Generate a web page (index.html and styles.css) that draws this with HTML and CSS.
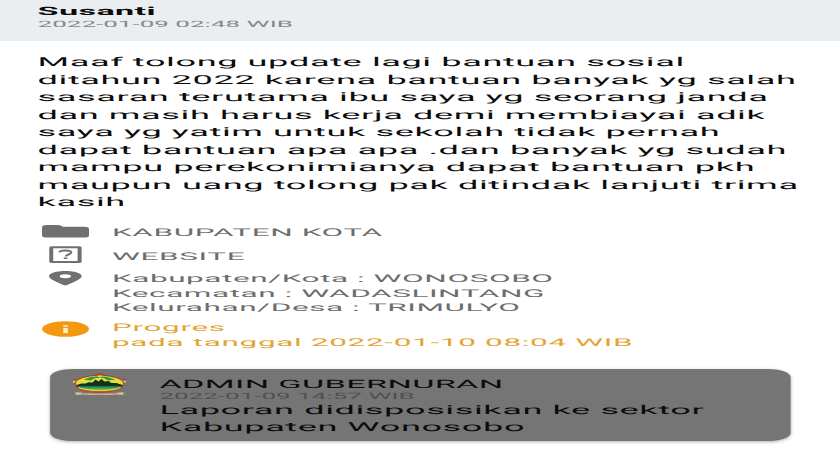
FILE: index.html
```
<!DOCTYPE html>
<html lang="id">
<head>
<meta charset="utf-8">
<title>Laporan</title>
<link rel="stylesheet" href="styles.css">
</head>
<body>
<main class="page">
  <header class="head">
    <div class="name">Susanti</div>
    <div class="date">2022-01-09 02:48 WIB</div>
  </header>
  <p class="message">Maaf tolong update lagi bantuan sosial<br>ditahun 2022 karena bantuan banyak yg salah<br>sasaran terutama ibu saya yg seorang janda<br>dan masih harus kerja demi membiayai adik<br>saya yg yatim untuk sekolah tidak pernah<br>dapat bantuan apa apa .dan banyak yg sudah<br>mampu perekonimianya dapat bantuan pkh<br>maupun uang tolong pak ditindak lanjuti trima<br>kasih</p>
  <section class="info">
    <div class="row category">
      <svg class="icon" viewBox="1.3 0 56 20" preserveAspectRatio="none"><path d="M5 5.2Q5 3 10 3H21Q24 3 26 4.7H47Q52 4.7 52 6.8V13.4Q52 15.5 47 15.5H10Q5 15.5 5 13.4Z"/></svg>
      <div>KABUPATEN KOTA</div>
    </div>
    <div class="row source">
      <svg class="icon" viewBox="1.3 0 56 20" preserveAspectRatio="none"><path fill-rule="evenodd" d="M15 1.3H41Q44.6 1.3 44.6 2.6V16.8Q44.6 18.1 41 18.1H15Q12.2 18.1 12.2 16.8V2.6Q12.2 1.3 15 1.3ZM16.2 3.2V16.1H40.6V3.2Z"/><path class="mark" d="M22.4 7.6C22.4 4.8 34.3 4.8 34.3 7.6C34.3 9.5 28.6 9.6 28.6 11.6"/><path d="M26.7 12.5H30.4V14.1H26.7Z"/></svg>
      <div>WEBSITE</div>
    </div>
    <div class="row place">
      <svg class="icon" viewBox="1.3 0 56 20" preserveAspectRatio="none"><path fill-rule="evenodd" d="M28.3 1C19 1 12 3.2 12 6.2C12 10 28.3 15.5 28.3 15.5S44.6 10 44.6 6.2C44.6 3.2 37.5 1 28.3 1ZM28.3 4.2C31.8 4.2 34 5 34 6.2S31.8 8.2 28.3 8.2S22.6 7.4 22.6 6.2S24.8 4.2 28.3 4.2Z"/></svg>
      <div>Kabupaten/Kota : WONOSOBO<br>Kecamatan : WADASLINTANG<br>Kelurahan/Desa : TRIMULYO</div>
    </div>
    <div class="row status">
      <svg class="icon" viewBox="1.3 0 56 20" preserveAspectRatio="none"><ellipse cx="28.5" cy="9" rx="23.5" ry="7.8"/><path class="cut" d="M26.2 5.2H30.8V6.8H26.2ZM26.2 8.1H30.8V12.9H26.2Z"/></svg>
      <div>Progres<br>pada tanggal 2022-01-10 08:04 WIB</div>
    </div>
  </section>
  <article class="card">
    <svg class="crest" viewBox="1.3 0 60 24" preserveAspectRatio="none">
      <path fill="#d8c15a" d="M3 8L9 6.5L8 9L4 10ZM57 8L51 6.5L52 9L56 10Z"/>
      <path fill="#a9433a" d="M3 6.3L8 5.5L6 8ZM57 6.3L52 5.5L54 8ZM28 .6H33L35 2H26Z"/>
      <ellipse cx="30" cy="10.7" rx="24.5" ry="9" fill="#ab3d2e"/>
      <ellipse cx="30" cy="10.6" rx="23.5" ry="7.8" fill="#e4df3b"/>
      <path fill="#259b43" d="M14 6.5Q29 0 46 6.5L39 7.5L34 5H26L21 7.5Z"/>
      <path fill="#ead83b" d="M28 2.5H33L31.5 4.5H29Z"/>
      <path fill="#14311b" d="M7 12L12 10.4H16L19 9.3L23 9.6L26 6.6L29 8.5L32 6L35 8.5L39 8L42 10H47L53 12V13.5H7Z"/>
      <path fill="#16776b" d="M7 13H53L49 15H11Z"/>
      <path fill="#41b04b" d="M11 14.5H49Q44 18 30 18.3Q16 18 11 14.5Z"/>
      <path fill="none" stroke="#e4d23b" stroke-width="1.2" d="M9 14.6Q16 17.4 30 17.4T51 14.6"/>
      <path fill="none" stroke="#c9483a" stroke-width="1" d="M7 15Q14 18.7 30 18.7T53 15"/>
      <path fill="#dfcf9d" d="M5 19.2L12 19.8Q30 21 48 19.8L55 19.2L53 20.6L55 21.8L47 21.4Q30 22.6 13 21.4L5 21.8L7 20.6Z"/>
      <path fill="none" stroke="#a75545" stroke-width=".6" d="M12 20.5Q30 21.8 48 20.5"/>
    </svg>
    <div class="reply">
      <div class="admin">ADMIN GUBERNURAN</div>
      <div class="date">2022-01-09 14:57 WIB</div>
      <div class="text">Laporan didisposisikan ke sektor<br>Kabupaten Wonosobo</div>
    </div>
  </article>
</main>
</body>
</html>
```
FILE: styles.css
```
* { box-sizing: border-box; }
html, body { margin: 0; height: 450px; overflow: hidden; background: #fff; }

.page {
  --sx: 2.95;
  width: calc(840px / var(--sx));
  height: 450px;
  transform: scaleX(var(--sx));
  transform-origin: 0 0;
  font-family: Roboto, "Liberation Sans", sans-serif;
  font-size: 12.25px;
  line-height: 17.5px;
  letter-spacing: .197px;
  color: #0c0c0c;
  white-space: nowrap;
  text-rendering: geometricPrecision;
}
.head {
  height: 41px;
  padding: 3.7px 0 0 calc(37.6px / var(--sx));
  background: linear-gradient(#eaeef1 70%, #e9edee);
}
.name { font-size: 11.6px; line-height: 15px; font-weight: 700; letter-spacing: .12px; }
.date { font-size: 8.8px; line-height: 10.3px; letter-spacing: .01px; color: #858789; }
.head .date { line-height: 12px; }
.message { margin: 13.3px 0 0; padding-left: calc(37.6px / var(--sx)); height: 167.7px; }
.info { font-size: 10.7px; line-height: 14.6px; letter-spacing: .2px; color: #6d6d6d; }
.row { display: flex; padding-left: calc(37px / var(--sx)); gap: calc(19px / var(--sx)); }
.icon { width: calc(56px / var(--sx)); height: 20px; flex: none; fill: #707070; }
.category { height: 23.5px; padding-top: 4.2px; }
.category .icon { margin-top: -4.2px; }
.source { height: 22px; padding-top: 4.7px; }
.source .icon { margin-top: -5.5px; }
.mark { fill: none; stroke: #707070; stroke-width: 2; }
.place { height: 49.3px; padding-top: 4.9px; line-height: 14.4px; letter-spacing: .185px; }
.place .icon { margin-top: -2.1px; }
.status { height: 52.5px; padding-top: 4.6px; color: #e3a432; letter-spacing: .22px; }
.status .icon { margin-top: -1px; fill: #f3980f; }
.status .icon .cut { fill: #fff0d2; }
.card {
  display: flex;
  gap: calc(30px / var(--sx));
  margin: 0 calc(49px / var(--sx));
  height: 72px;
  padding: 6.4px 0 0 calc(20.5px / var(--sx));
  border-radius: 8px;
  background: #757575;
  box-shadow: 0 1px 2px rgba(0, 0, 0, .3);
}
.crest { width: calc(60px / var(--sx)); height: 24px; flex: none; margin-top: -2.2px; }
.admin { font-size: 11.6px; line-height: 16px; letter-spacing: .12px; }
.card .date { color: #505050; }
```
